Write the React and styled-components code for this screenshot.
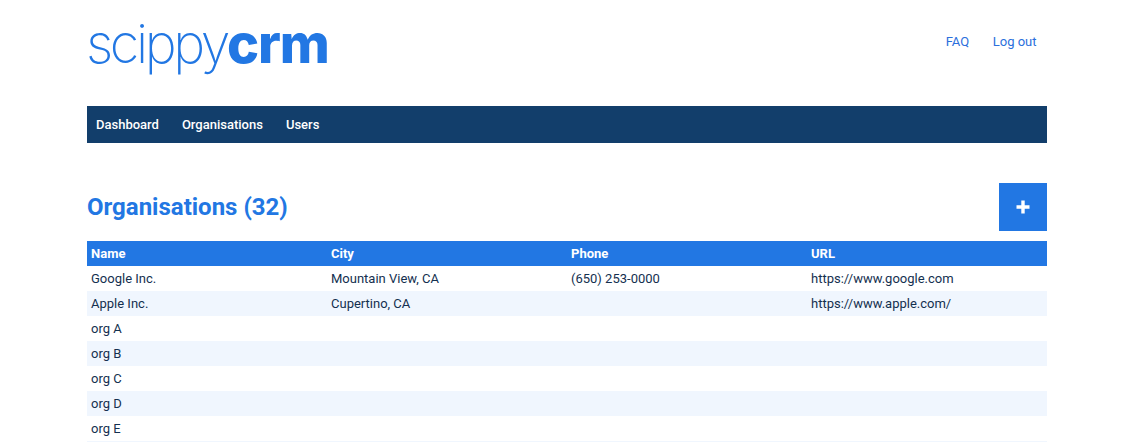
import React from 'react';
import styled, { createGlobalStyle } from 'styled-components';

const GlobalStyle = createGlobalStyle`
	html, body {
		margin: 0;
		padding: 0;
		background: #FFFFFF;
		height: 442px;
		overflow: hidden;
	}
	body {
		font-family: Roboto, "Liberation Sans", sans-serif;
		font-size: 13px;
		color: #14304F;
	}
`;

const Page = styled.div`
	width: 960px;
	height: 442px;
	margin-left: 87px;
	overflow: hidden;
`;

const Header = styled.header`
	height: 106px;
	display: flex;
	justify-content: space-between;
	align-items: flex-start;
`;

const Logo = styled.a`
	display: block;
	margin: 8px 0 0 -1px;
	font-family: Inter, "Liberation Sans", sans-serif;
	font-size: 54px;
	line-height: 72px;
	letter-spacing: -3.4px;
	color: #2277E3;
	font-weight: 200;
	white-space: nowrap;
`;

const LogoBold = styled.span`
	font-weight: 800;
	letter-spacing: -1.2px;
`;

const TopLinks = styled.nav`
	display: flex;
	gap: 23.5px;
	padding: 34px 10.5px 0 0;
`;

const TopLink = styled.a`
	color: #2B6FDC;
	font-size: 13px;
	line-height: 15px;
`;

const NavBar = styled.nav`
	height: 37px;
	background: #123E6B;
	display: flex;
	align-items: center;
	gap: 23px;
	padding-left: 9px;
`;

const NavLink = styled.a`
	color: #FFFFFF;
	font-size: 13px;
	font-weight: 500;
`;

const TitleRow = styled.div`
	display: flex;
	justify-content: space-between;
	align-items: center;
	margin: 40px 0 10px;
`;

const Title = styled.h1`
	margin: 0;
	font-size: 24px;
	font-weight: 700;
	color: #2277E3;
`;

const AddButton = styled.button`
	width: 48px;
	height: 48px;
	padding: 0 1px 1px 0;
	border: 0;
	background: #2277E3;
	display: flex;
	align-items: center;
	justify-content: center;
`;

const Table = styled.div`
	display: flex;
	flex-direction: column;
`;

const Row = styled.div`
	display: grid;
	grid-template-columns: 240px 240px 240px 240px;
	flex: none;
	height: 25px;
	align-items: center;
	background: ${props => props.$head ? '#2277E3' : props.$tint ? '#F0F6FE' : '#FFFFFF'};
	color: ${props => props.$head ? '#FFFFFF' : '#14304F'};
	font-weight: ${props => props.$head ? 700 : 400};
`;

const Cell = styled.div`
	padding-left: 4px;
	white-space: nowrap;
`;

// the last row only shows as a 1px edge at the bottom of the window
const rows = [
	['Google Inc.', 'Mountain View, CA', '(650) 253-0000', 'https://www.google.com'],
	['Apple Inc.', 'Cupertino, CA', '', 'https://www.apple.com/'],
	['org A', '', '', ''],
	['org B', '', '', ''],
	['org C', '', '', ''],
	['org D', '', '', ''],
	['org E', '', '', ''],
	['', '', '', ''],
];

export default function App() {
	return (
		<Page>
			<GlobalStyle />
			<Header>
				<Logo>scippy<LogoBold>crm</LogoBold></Logo>
				<TopLinks>
					<TopLink>FAQ</TopLink>
					<TopLink>Log out</TopLink>
				</TopLinks>
			</Header>
			<NavBar>
				<NavLink>Dashboard</NavLink>
				<NavLink>Organisations</NavLink>
				<NavLink>Users</NavLink>
			</NavBar>
			<TitleRow>
				<Title>Organisations (32)</Title>
				<AddButton aria-label="Add">
					<svg width="14" height="14" viewBox="0 0 14 14">
						<path d="M5.3 0.5h3.4v4.8h4.8v3.4h-4.8v4.8h-3.4v-4.8h-4.8v-3.4h4.8z" fill="#FFFFFF" />
					</svg>
				</AddButton>
			</TitleRow>
			<Table>
				<Row $head>
					<Cell>Name</Cell>
					<Cell>City</Cell>
					<Cell>Phone</Cell>
					<Cell>URL</Cell>
				</Row>
				{rows.map((row, i) => (
					<Row key={i} $tint={i % 2 === 1}>
						{row.map((value, j) => <Cell key={j}>{value}</Cell>)}
					</Row>
				))}
			</Table>
		</Page>
	);
}
